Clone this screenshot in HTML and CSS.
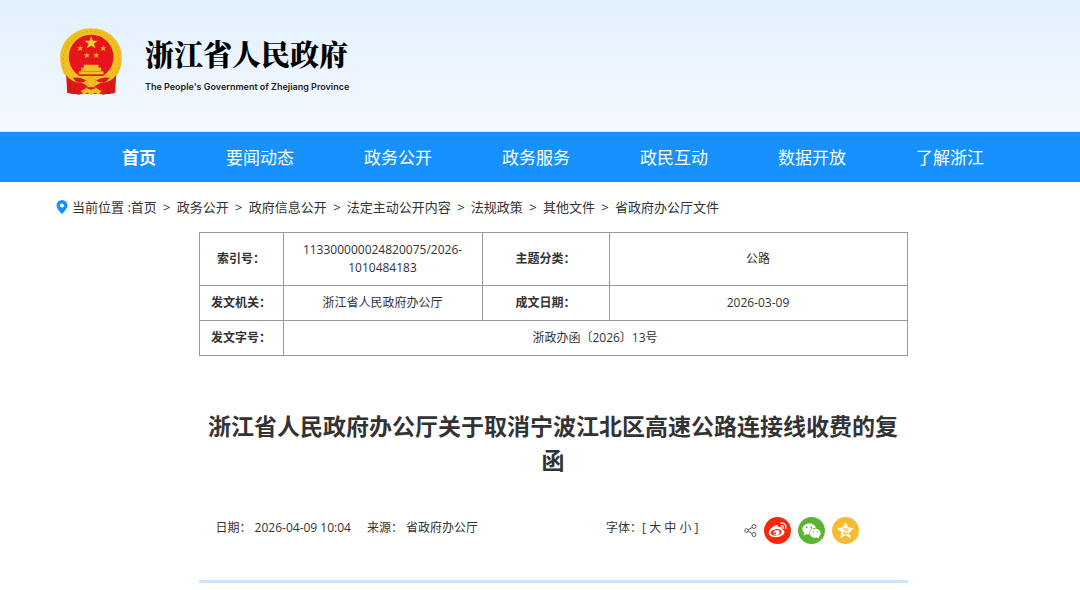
FILE: index.html
```html
<!DOCTYPE html>
<html lang="zh-CN">
<head>
<meta charset="utf-8">
<meta name="viewport" content="width=device-width, initial-scale=1">
<title>浙江省人民政府</title>
<link rel="stylesheet" href="styles.css">
</head>
<body>
<header class="header">
  <div class="wrap brand">
    <svg class="emblem" viewBox="28 22 188 204" aria-hidden="true">
      <path fill="#f1bf22" d="M121 23c52 0 92 38 92 88 0 31-12 55-31 73H60c-20-18-32-42-32-73 0-50 41-88 93-88z"/>
      <path fill="none" stroke="#d99b16" stroke-width="2" stroke-dasharray="7 6" d="M50 168C28 132 34 80 68 52c33-28 76-26 106 0 34 29 40 80 18 116"/>
      <circle cx="121" cy="109" r="67" fill="#e8141b"/>
      <path fill="#f9d02c" d="M121 46l5 14h15l-12 9 5 14-13-8-13 8 5-14-12-9h15z"/>
      <g fill="#f5b824">
        <path id="s" d="M88 74l2 6h7l-5 4 2 7-6-4-6 4 2-7-5-4h7z"/>
        <use href="#s" x="69"/><use href="#s" x="20" y="21"/><use href="#s" x="48" y="21"/>
      </g>
      <path fill="#f3c02a" d="M99 132h44v9h8v10h-60v-10h8z"/>
      <path fill="#df171b" d="M62 176h118l-6 44H68z"/>
      <path fill="#f3c02a" d="M84 152h74v9H84z"/>
      <path fill="#f1bf22" d="M54 166h134l-8 22-30 12H92l-30-12z"/>
      <path fill="#df171b" d="M66 171q24-3 40 9-18 10-32 2zM176 171q-24-3-40 9 18 10 32 2zM84 194q18-5 28 3-12 8-26 6zM158 194q-18-5-28 3 12 8 26 6z"/>
      <circle cx="121" cy="184" r="13" fill="#f1bf22" stroke="#e0a018" stroke-width="2"/>
      <path fill="#df171b" d="M46 164q14 21 46 23l12 5-16 30-12-1-2-4-8 3-17-3zM196 164q-14 21-46 23l-12 5 16 30 12-1 2-4 8 3 17-3z"/>
      <path fill="none" stroke="#b0161a" stroke-width="2" d="M60 186l-4 28M72 192l-3 26M170 192l3 26M182 186l4 28"/>
      <path fill="#f1bf22" d="M90 212l16-10 15 5 15-5 16 10-9 10-10-6-12 7-12-7-10 6z"/>
    </svg>
    <div class="brand-text">
      <div class="brand-name">浙江省人民政府</div>
      <div class="brand-en">The People's Government of Zhejiang Province</div>
    </div>
  </div>
</header>
<nav class="nav">
  <div class="wrap nav-list">
    <a class="active" href="#">首页</a>
    <a href="#">要闻动态</a>
    <a href="#">政务公开</a>
    <a href="#">政务服务</a>
    <a href="#">政民互动</a>
    <a href="#">数据开放</a>
    <a href="#">了解浙江</a>
  </div>
</nav>
<main class="wrap">
  <div class="crumbs">
    <svg class="pin" viewBox="0 0 12 14" aria-hidden="true"><path fill="#1890ff" fill-rule="evenodd" d="M6 0a5.500 5.500 0 0 1 5.500 5.500C11.500 9 6 14 6 14S.5 9 .5 5.500A5.500 5.500 0 0 1 6 0zm0 3.500a2 2 0 1 0 0 4 2 2 0 0 0 0-4z"/></svg>
    <span class="crumb-first">当前位置 :<a href="#">首页</a></span><i>&gt;</i>
    <a href="#">政务公开</a><i>&gt;</i>
    <a href="#">政府信息公开</a><i>&gt;</i>
    <a href="#">法定主动公开内容</a><i>&gt;</i>
    <a href="#">法规政策</a><i>&gt;</i>
    <a href="#">其他文件</a><i>&gt;</i>
    <a href="#">省政府办公厅文件</a>
  </div>
  <article class="article">
    <table class="info">
      <colgroup><col class="c1"><col class="c2"><col class="c3"><col class="c4"></colgroup>
      <tr><th scope="row">索引号：</th><td>113300000024820075/2026-<br>1010484183</td><th scope="row">主题分类：</th><td>公路</td></tr>
      <tr><th scope="row">发文机关：</th><td>浙江省人民政府办公厅</td><th scope="row">成文日期：</th><td>2026-03-09</td></tr>
      <tr><th scope="row">发文字号：</th><td colspan="3">浙政办函〔2026〕13号</td></tr>
    </table>
    <h1 class="title">浙江省人民政府办公厅关于取消宁波江北区高速公路连接线收费的复函</h1>
    <div class="meta">
      <span class="date">日期： 2026-04-09 10:04</span>
      <span>来源： 省政府办公厅</span>
      <div class="sizes">字体：[ <button type="button">大</button> <button type="button">中</button> <button type="button">小</button> ]</div>
      <div class="share">
        <svg class="share-mark" viewBox="0 0 13 13" fill="none" stroke="#555" aria-hidden="true"><circle cx="2.500" cy="6.500" r="1.800"/><circle cx="10" cy="2.500" r="2"/><circle cx="10" cy="10.500" r="2"/><path d="M4.200 5.700l4-2.200M4.200 7.400l4 2.200"/></svg>
        <a href="#" aria-label="微博"><svg viewBox="0 0 80 80"><circle cx="40" cy="40" r="40" fill="#f5270c"/><path fill="#fff" fill-rule="evenodd" d="M34 25c6-3 10 0 8 6 8-3 14 0 12 6 6 2 8 6 6 11-4 8-15 12-26 12-12 0-20-5-20-13 0-7 9-18 20-22zm1 11c-9 1-16 6-15 12 1 5 8 8 17 7 9-1 16-6 15-12-1-5-8-8-17-7zm1 3c8-1 12 4 10 9-2 5-8 7-13 5-5-1-7-6-4-10 2-3 4-4 7-4z"/><circle cx="33" cy="48" r="3" fill="#f5270c"/><path fill="none" stroke="#fff" stroke-width="4" stroke-linecap="round" d="M50 18c10-2 17 6 14 16M51 26c5-1 8 2 6 7"/></svg></a>
        <a href="#" aria-label="微信"><svg viewBox="0 0 80 80"><circle cx="40" cy="40" r="40" fill="#5cb532"/><path fill="#fff" d="M33 19c11 0 19 6 20 14-11-1-21 7-19 18l-10 0-7 4 2-8c-4-3-6-6-6-11 0-9 9-17 20-17z"/><path fill="#fff" d="M51 35c9 0 16 6 16 13 0 4-2 7-5 10l1 6-6-3c-13 2-22-4-22-13 0-7 7-13 16-13z"/><g fill="#5cb532"><circle cx="26" cy="31" r="2.500"/><circle cx="39" cy="31" r="2.500"/><circle cx="46" cy="44" r="2"/><circle cx="57" cy="44" r="2"/></g></svg></a>
        <a href="#" aria-label="QQ空间"><svg viewBox="0 0 80 80"><circle cx="40" cy="40" r="40" fill="#f6bb33"/><path fill="#fff" stroke="#fff" stroke-width="2" stroke-linejoin="round" d="M40 17l7 15 16 2-12 11 3 16-14-8-14 8 3-16-12-11 16-2z"/><path fill="none" stroke="#f6bb33" stroke-width="3" d="M31 36q9-2 17 1L34 48q9 3 20 0"/></svg></a>
      </div>
    </div>
  </article>
</main>
</body>
</html>
```

FILE: styles.css
```css
* { box-sizing: border-box; }
body {
  margin: 0;
  background: #fff;
  color: #333;
  font-family: "Open Sans", "Noto Sans CJK SC", sans-serif;
  font-size: 12px;
}
a { color: inherit; text-decoration: none; }
.wrap { margin: 0 30px 0 56px; }
.header {
  background: linear-gradient(#e1f0ff, #f5f9ff);
  border-bottom: 1px solid #d9ecff;
}
.brand {
  display: flex;
  align-items: flex-start;
  gap: 22px;
  padding: 28px 0 35px 4px;
}
.emblem { width: 63px; height: 68px; }
.brand-text { padding-top: 5px; color: #000; }
.brand-name {
  font-family: "Noto Serif CJK SC", "Source Han Serif SC", "Noto Sans CJK SC", serif;
  font-size: 29px;
  font-weight: 900;
  line-height: 42px;
}
.brand-en {
  font-family: Inter, "Liberation Sans", Arial, sans-serif;
  font-size: 9px;
  font-weight: 600;
  line-height: 12px;
  margin-top: 6px;
  color: #222;
}
.nav { background: #1691ff; }
.nav-list {
  display: flex;
  justify-content: center;
  gap: 70px;
  padding-top: 2px;
  color: #fff;
  font-size: 17px;
  line-height: 48px;
  white-space: nowrap;
}
.nav .active { font-weight: 700; }
.crumbs {
  display: flex;
  align-items: center;
  font-size: 13px;
  line-height: 20px;
  padding: 15px 0;
  white-space: nowrap;
}
.crumbs i { font-style: normal; width: 20px; text-align: center; }
.pin { width: 12px; height: 14px; margin-right: 4px; }
.article { max-width: 709px; margin: 0 auto; }
.info {
  width: 100%;
  table-layout: fixed;
  border-collapse: collapse;
  text-align: center;
  line-height: 18px;
}
.info th, .info td { border: 1px solid #999; padding: 8px 6px; }
.c1 { width: 84px; }
.c2 { width: 199px; }
.c3 { width: 127px; }
.info th { padding: 8px 2px; font-weight: 700; }
.title {
  margin: 53px 0 0;
  font-size: 23px;
  line-height: 34px;
  text-align: center;
}
.meta {
  display: flex;
  align-items: flex-start;
  margin-top: 40px;
  padding: 0 49px 36px 17px;
  border-bottom: 3px solid #cce6ff;
  line-height: 22px;
  white-space: nowrap;
}
.date { margin-right: 16px; }
.sizes { margin-left: auto; }
.sizes button {
  border: 0;
  padding: 0;
  background: none;
  color: inherit;
  font: inherit;
}
.share { display: flex; align-items: center; gap: 7px; margin-left: 45px; }
.share svg { display: block; width: 27px; height: 27px; }
.share .share-mark { width: 13px; height: 13px; }
```
